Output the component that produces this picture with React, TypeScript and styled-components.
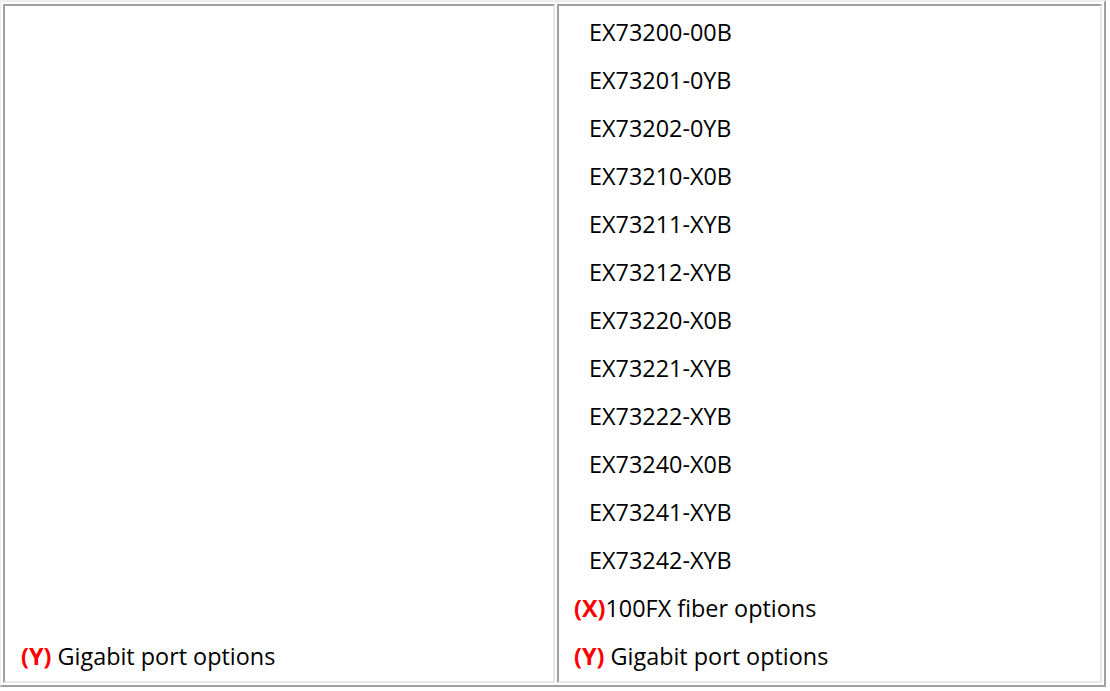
import React from "react";
import styled, { createGlobalStyle } from "styled-components";

const Global = createGlobalStyle`
  html, body { margin: 0; padding: 0; background: #ffffff; }
  body { font-family: "Open Sans", "Liberation Sans", sans-serif; color: #000; }
`;

const Table = styled.table`
  width: 1105px;
  height: 687px;
  border-style: solid;
  border-width: 2px 2px 2px 1px;
  border-color: #eeeeee #a0a0a0 #a0a0a0 #eeeeee;
  border-spacing: 2px;
  border-collapse: separate;
  table-layout: fixed;
`;

const Cell = styled.td<{ $w: number; $pad: number }>`
  width: ${(p) => p.$w}px;
  box-sizing: border-box;
  border-style: solid;
  border-width: 2px;
  border-color: #a0a0a0 #e8e8e8 #e8e8e8 #a0a0a0;
  vertical-align: bottom;
  padding: 2px 0 1px ${(p) => p.$pad}px;
  font-size: 23.4px;
  line-height: 48px;
`;

const Line = styled.div<{ $indent?: boolean }>`
  height: 48px;
  white-space: nowrap;
  padding-left: ${(p) => (p.$indent ? 15 : 0)}px;
`;

const Mark = styled.span`
  color: #ff0000;
  font-weight: 700;
`;

const models = [
  "EX73200-00B",
  "EX73201-0YB",
  "EX73202-0YB",
  "EX73210-X0B",
  "EX73211-XYB",
  "EX73212-XYB",
  "EX73220-X0B",
  "EX73221-XYB",
  "EX73222-XYB",
  "EX73240-X0B",
  "EX73241-XYB",
  "EX73242-XYB",
];

export default function App() {
  return (
    <>
      <Global />
      <Table>
        <tbody>
          <tr>
            <Cell $w={552} $pad={16}>
              <Line>
                <Mark>(Y)</Mark> Gigabit port options
              </Line>
            </Cell>
            <Cell $w={545} $pad={15}>
              {models.map((m) => (
                <Line key={m} $indent>
                  {m}
                </Line>
              ))}
              <Line>
                <Mark>(X)</Mark>100FX fiber options
              </Line>
              <Line>
                <Mark>(Y)</Mark> Gigabit port options
              </Line>
            </Cell>
          </tr>
        </tbody>
      </Table>
    </>
  );
}
